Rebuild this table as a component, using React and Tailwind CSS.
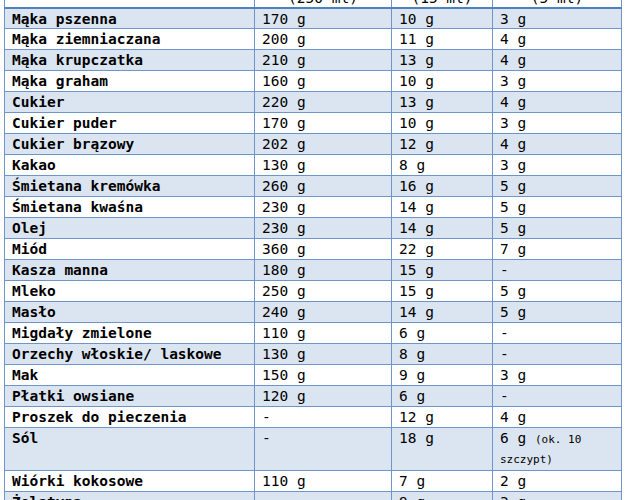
const ROWS = [
  ['Mąka pszenna', '170 g', '10 g', '3 g'],
  ['Mąka ziemniaczana', '200 g', '11 g', '4 g'],
  ['Mąka krupczatka', '210 g', '13 g', '4 g'],
  ['Mąka graham', '160 g', '10 g', '3 g'],
  ['Cukier', '220 g', '13 g', '4 g'],
  ['Cukier puder', '170 g', '10 g', '3 g'],
  ['Cukier brązowy', '202 g', '12 g', '4 g'],
  ['Kakao', '130 g', '8 g', '3 g'],
  ['Śmietana kremówka', '260 g', '16 g', '5 g'],
  ['Śmietana kwaśna', '230 g', '14 g', '5 g'],
  ['Olej', '230 g', '14 g', '5 g'],
  ['Miód', '360 g', '22 g', '7 g'],
  ['Kasza manna', '180 g', '15 g', '-'],
  ['Mleko', '250 g', '15 g', '5 g'],
  ['Masło', '240 g', '14 g', '5 g'],
  ['Migdały zmielone', '110 g', '6 g', '-'],
  ['Orzechy włoskie/ laskowe', '130 g', '8 g', '-'],
  ['Mak', '150 g', '9 g', '3 g'],
  ['Płatki owsiane', '120 g', '6 g', '-'],
  ['Proszek do pieczenia', '-', '12 g', '4 g'],
  ['Sól', '-', '18 g', 'salt'],
  ['Wiórki kokosowe', '110 g', '7 g', '2 g'],
  ['Żelatyna', '-', '9 g', '3 g'],
];

export default function App() {
  return (
    <div className="relative h-[500px] w-[626px] overflow-hidden bg-white text-black font-['DejaVu_Sans_Mono',monospace] text-[14.5px]">
      <table className="ml-[4px] mt-[-43px] w-[617px] table-fixed border-collapse">
        <colgroup>
          <col className="w-[250px]" />
          <col className="w-[137px]" />
          <col className="w-[101px]" />
          <col className="w-[129px]" />
        </colgroup>
        <thead>
          <tr className="h-[50px]">
            <th className="border border-[#7094c8] border-b-2 border-b-[#4f81bd] align-bottom"></th>
            <th className="border border-[#7094c8] border-b-2 border-b-[#4f81bd] align-bottom pb-0 font-normal leading-[18px]">Szklanka<br />(250 ml)</th>
            <th className="border border-[#7094c8] border-b-2 border-b-[#4f81bd] align-bottom pb-0 font-normal leading-[18px]">Łyżka<br />(15 ml)</th>
            <th className="border border-[#7094c8] border-b-2 border-b-[#4f81bd] align-bottom pb-0 font-normal leading-[18px]">Łyżeczka<br />(5 ml)</th>
          </tr>
        </thead>
        <tbody>
          {ROWS.map((r, i) => {
            const shaded = i % 2 === 0;
            const tall = r[3] === 'salt';
            return (
              <tr key={r[0]} className={`${shaded ? 'bg-[#dbe5f1]' : 'bg-white'} ${tall ? 'h-[40px]' : 'h-[21px]'}`}>
                <td className="border border-[#7094c8] pl-[7px] align-top pt-[1px] font-bold leading-[18px] whitespace-nowrap">{r[0]}</td>
                <td className="border border-[#7094c8] pl-[7px] align-top pt-[1px] leading-[18px]">{r[1]}</td>
                <td className="border border-[#7094c8] pl-[7px] align-top pt-[1px] leading-[18px]">{r[2]}</td>
                <td className="border border-[#7094c8] pl-[7px] align-top pt-[1px] leading-[18px]">
                  {tall ? (
                    <>
                      6 g <span className="text-[11px]">(ok. 10</span>
                      <br />
                      <span className="text-[11px] leading-[20px]">szczypt)</span>
                    </>
                  ) : r[3]}
                </td>
              </tr>
            );
          })}
        </tbody>
      </table>
    </div>
  );
}
